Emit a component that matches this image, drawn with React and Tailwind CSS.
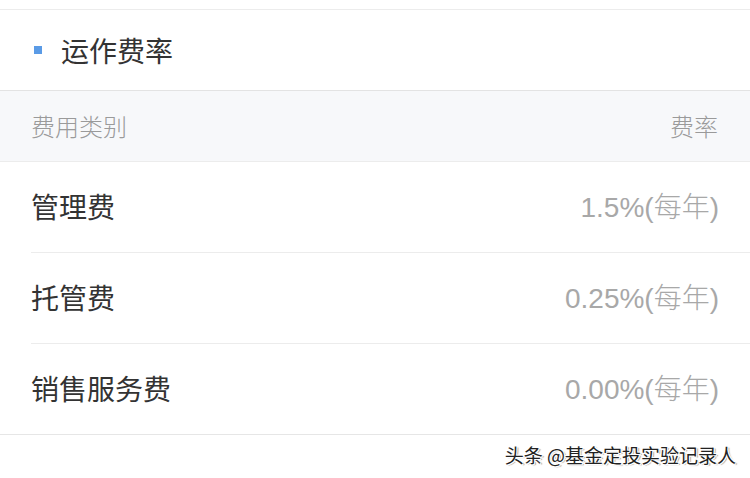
export default function App() {
  const rows = [
    ["管理费", "1.5%(每年)"],
    ["托管费", "0.25%(每年)"],
    ["销售服务费", "0.00%(每年)"],
  ];
  return (
    <div
      className="w-[750px] h-[478px] bg-white overflow-hidden relative"
      style={{ fontFamily: '"Noto Sans CJK SC", "Noto Sans", sans-serif' }}
    >
      <div className="h-[9px]" />
      <div className="h-px bg-[#ececec]" />
      <div className="h-[80px] flex items-center pl-[34px]">
        <div className="w-[8px] h-[8px] bg-[#5a9be6] mr-[19px]" />
        <div className="text-[28px] text-[#333333] leading-none">运作费率</div>
      </div>
      <div className="h-px bg-[#e3e3e3]" />
      <div className="h-[70px] bg-[#f7f8fa] flex items-center justify-between pl-[31px] pr-[32px]">
        <span className="text-[24px] text-[#9a9a9a] leading-none font-light">费用类别</span>
        <span className="text-[24px] text-[#9a9a9a] leading-none font-light">费率</span>
      </div>
      <div className="h-px bg-[#ececec]" />
      {rows.map(([label, value], i) => (
        <div key={label}>
          <div className="h-[90px] flex items-center justify-between pl-[31px] pr-[31px] pb-[2px]">
            <span className="text-[28px] text-[#333333] leading-none">{label}</span>
            <span
              className="mt-[3px] text-[28px] text-[#a8a8a8] leading-none font-light font-['Liberation_Sans','Noto_Sans_CJK_SC',sans-serif]"
            >
              {value}
            </span>
          </div>
          {i < rows.length - 1 ? (
            <div className="h-px bg-[#ececec] ml-[31px]" />
          ) : (
            <div className="h-px bg-[#e6e6e6]" />
          )}
        </div>
      ))}
      <div className="flex justify-end pr-[14px] pt-[10px]">
        <span
          className="text-[19px] text-[#222222] leading-none"
          style={{ textShadow: "1px 1px 0 #fff, -1px -1px 0 #fff, 1px -1px 0 #fff, -1px 1px 0 #fff, 2px 1px 1px #999" }}
        >
          头条 @基金定投实验记录人
        </span>
      </div>
    </div>
  );
}
